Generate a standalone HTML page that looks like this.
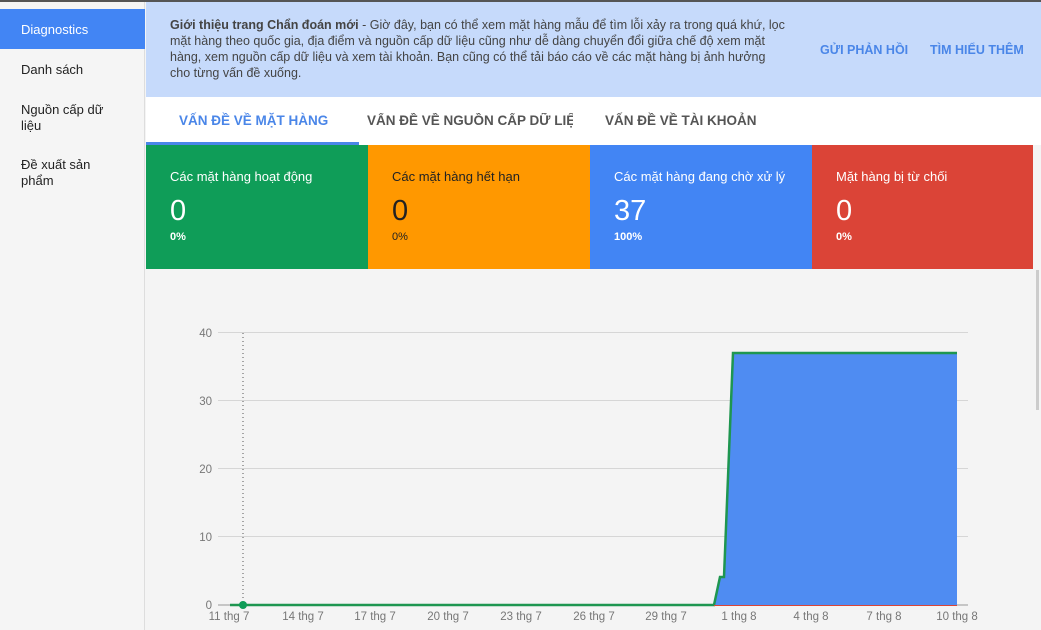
<!DOCTYPE html>
<html><head><meta charset="utf-8"><style>
*{margin:0;padding:0;box-sizing:border-box}
body{width:1041px;height:630px;overflow:hidden;background:#f4f4f4;font-family:"Liberation Sans","Noto Sans CJK SC",sans-serif;position:relative}
.top{position:absolute;left:0;top:0;width:1041px;height:2px;background:#555}
.side{position:absolute;left:0;top:2px;width:145px;height:628px;background:#f5f5f5;border-right:1px solid #ddd}
.side div{position:absolute;left:21px;font-size:13px;color:#222;line-height:16px}
.side .act{left:0;top:7px;width:145px;height:40px;background:#4285f4;color:#fff;padding:13px 21px 0}
.banner{position:absolute;left:146px;top:2px;width:895px;height:95px;background:#c6dafb}
.banner p{position:absolute;left:24px;top:15px;white-space:nowrap;font-size:12.5px;line-height:16px;color:#444}
.banner a{position:absolute;top:41px;font-size:12.5px;color:#4a86e8;font-weight:bold}
.tabs{position:absolute;left:146px;top:97px;width:895px;height:48px;background:#fff}
.tabs span{position:absolute;top:16px;font-size:13.5px;font-weight:bold;color:#555;white-space:nowrap}
.card{position:absolute;top:145px;height:124px;width:222px;color:#fff}
.card .t{position:absolute;left:24px;top:24px;font-size:13px}
.card .n{position:absolute;left:24px;top:50px;font-size:29px}
.card .p{position:absolute;left:24px;top:86px;font-size:11px;font-weight:bold}
.ax{font-family:"Liberation Sans",sans-serif;font-size:11.5px;fill:#777}
</style></head><body>
<div class="top"></div>
<div class="side">
<div class="act">Diagnostics</div>
<div style="top:60px">Danh sách</div>
<div style="top:100px">Nguồn cấp dữ<br>liệu</div>
<div style="top:155px">Đề xuất sản<br>phẩm</div>
</div>
<div class="banner">
<p><b>Giới thiệu trang Chẩn đoán mới</b> - Giờ đây, bạn có thể xem mặt hàng mẫu để tìm lỗi xảy ra trong quá khứ, lọc<br>mặt hàng theo quốc gia, địa điểm và nguồn cấp dữ liệu cũng như dễ dàng chuyển đổi giữa chế độ xem mặt<br>hàng, xem nguồn cấp dữ liệu và xem tài khoản. Bạn cũng có thể tải báo cáo về các mặt hàng bị ảnh hưởng<br>cho từng vấn đề xuống.</p>
<a style="left:674px">GỬI PHẢN HỒI</a>
<a style="left:784px">TÌM HIỂU THÊM</a>
</div>
<div class="tabs">
<span style="left:33px;color:#4a86e8">VẤN ĐỀ VỀ MẶT HÀNG</span>
<span style="left:221px;width:206px;overflow:hidden">VẤN ĐỀ VỀ NGUỒN CẤP DỮ LIỆU</span>
<span style="left:459px">VẤN ĐỀ VỀ TÀI KHOẢN</span>
<div style="position:absolute;left:0;top:45px;width:213px;height:3px;background:#4a86e8"></div>
</div>
<div class="card" style="left:146px;background:#0f9d58"><div class="t">Các mặt hàng hoạt động</div><div class="n">0</div><div class="p">0%</div></div>
<div class="card" style="left:368px;background:#ff9800;color:#222"><div class="t">Các mặt hàng hết hạn</div><div class="n">0</div><div class="p" style="font-weight:normal">0%</div></div>
<div class="card" style="left:590px;background:#4285f4"><div class="t">Các mặt hàng đang chờ xử lý</div><div class="n">37</div><div class="p">100%</div></div>
<div class="card" style="left:812px;width:221px;background:#db4437"><div class="t">Mặt hàng bị từ chối</div><div class="n">0</div><div class="p">0%</div></div>
<div style="position:absolute;left:1036px;top:270px;width:3px;height:140px;background:#ccc"></div>
<svg style="position:absolute;left:0;top:0" width="1041" height="630">
<g stroke="#d6d6d6" stroke-width="1">
<line x1="218" y1="332.5" x2="968" y2="332.5"/><line x1="218" y1="400.5" x2="968" y2="400.5"/><line x1="218" y1="468.5" x2="968" y2="468.5"/><line x1="218" y1="536.5" x2="968" y2="536.5"/>
</g>
<line x1="218" y1="605" x2="968" y2="605" stroke="#999"/>
<line x1="243" y1="333" x2="243" y2="605" stroke="#555" stroke-dasharray="1,3"/>
<polygon points="714,605 720,578 724,578 733,354 957,354 957,605" fill="#4f8cf2"/>
<polyline points="230,605 714,605 720,577 724,577 733,353 957,353" fill="none" stroke="#1e9650" stroke-width="2.5"/>
<line x1="714" y1="605.5" x2="957" y2="605.5" stroke="#db4437"/>
<circle cx="243" cy="605" r="4" fill="#0f9d58"/>
<g class="ax" text-anchor="end"><text x="212" y="337">40</text><text x="212" y="405">30</text><text x="212" y="473">20</text><text x="212" y="541">10</text><text x="212" y="609">0</text></g>
<g class="ax" text-anchor="middle"><text x="229" y="620">11 thg 7</text><text x="303" y="620">14 thg 7</text><text x="375" y="620">17 thg 7</text><text x="448" y="620">20 thg 7</text><text x="521" y="620">23 thg 7</text><text x="594" y="620">26 thg 7</text><text x="666" y="620">29 thg 7</text><text x="739" y="620">1 thg 8</text><text x="811" y="620">4 thg 8</text><text x="884" y="620">7 thg 8</text><text x="957" y="620">10 thg 8</text></g>
</svg>
</body></html>
